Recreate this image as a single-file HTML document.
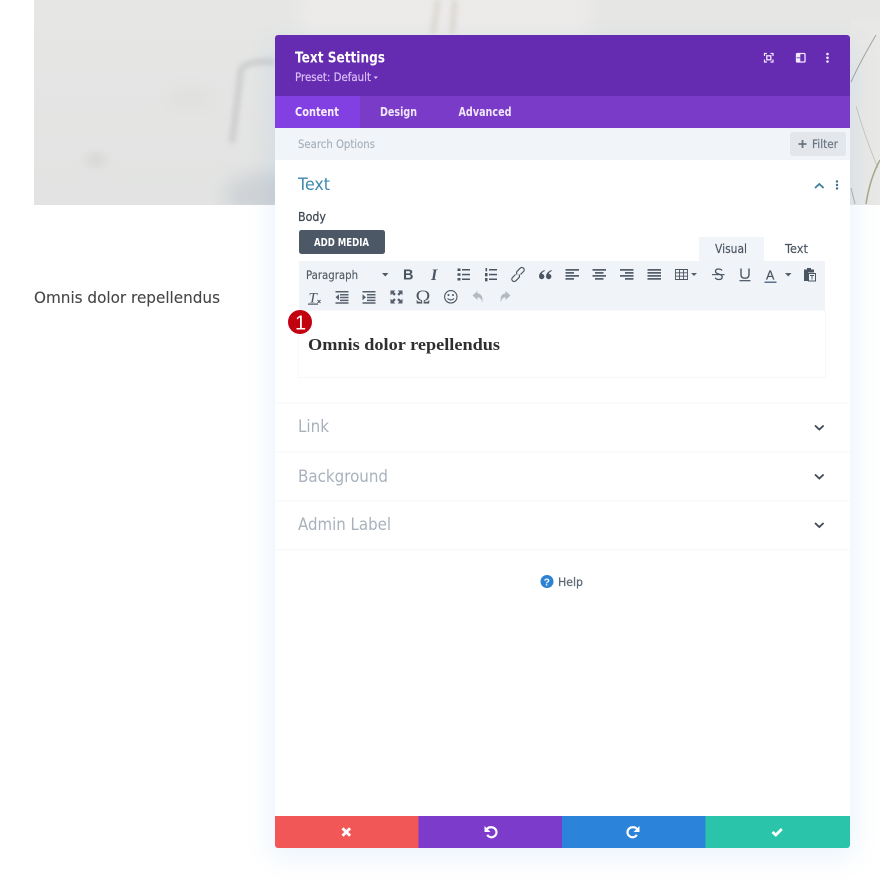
<!DOCTYPE html>
<html><head><meta charset="utf-8"><title>Text Settings</title>
<style>
html,body{margin:0;padding:0;background:#fff;width:880px;height:883px;overflow:hidden}
svg{display:block}
text{font-family:"DejaVu Sans","Liberation Sans",sans-serif}
.s{font-weight:bold}
</style></head><body>
<svg width="880" height="883" viewBox="0 0 880 883" xmlns="http://www.w3.org/2000/svg">
<defs>
<filter id="b3" filterUnits="userSpaceOnUse" x="0" y="-60" width="880" height="320"><feGaussianBlur stdDeviation="3"/></filter>
<filter id="b5" filterUnits="userSpaceOnUse" x="0" y="-60" width="880" height="320"><feGaussianBlur stdDeviation="5"/></filter>
<filter id="b6" filterUnits="userSpaceOnUse" x="0" y="-60" width="880" height="320"><feGaussianBlur stdDeviation="9"/></filter>
<filter id="sh" x="-20%" y="-20%" width="140%" height="140%"><feGaussianBlur stdDeviation="14"/></filter>
<linearGradient id="bg" x1="0" y1="0" x2="0" y2="1"><stop offset="0" stop-color="#e6e6e5"/><stop offset="1" stop-color="#e2e3e2"/></linearGradient>
<clipPath id="im"><rect x="34" y="0" width="846" height="205"/></clipPath>
<clipPath id="p"><rect x="275" y="35" width="575" height="813" rx="3"/></clipPath>
</defs>
<rect width="880" height="883" fill="#fff"/>
<g clip-path="url(#im)">
<rect x="34" y="0" width="846" height="205" fill="url(#bg)"/>
<ellipse cx="262" cy="195" rx="38" ry="22" fill="#cfd3d6" filter="url(#b6)"/>
<path d="M232 143 L241 70 Q244 60 275 62" fill="none" stroke="#c6c8c7" stroke-width="5" filter="url(#b3)"/>
<ellipse cx="96" cy="160" rx="10" ry="6" fill="#d5d6d4" filter="url(#b5)"/>
<ellipse cx="190" cy="98" rx="24" ry="6" fill="#dcdddb" filter="url(#b6)"/>
<rect x="300" y="-10" width="290" height="50" fill="#ecebe9" filter="url(#b6)"/>
<path d="M438 0 L433 34M455 0 L452 34" stroke="#d6d0c8" stroke-width="4" filter="url(#b3)" fill="none"/>
<rect x="850" y="20" width="30" height="185" fill="#e8e8e6"/>
<path d="M876 35 Q860 62 851 82" stroke="#a5a59b" stroke-width="1" fill="none"/>
<path d="M856 106 Q866 140 878 168" stroke="#c0c1b9" stroke-width=".8" fill="none"/>
<path d="M880 160 Q870 178 866 204" stroke="#a5a98a" stroke-width="1.500" fill="none"/>
<path d="M851 188 L855 204" stroke="#b0b0a8" stroke-width="1" fill="none"/>
</g>
<text x="34" y="303" font-size="16" fill="#454545" stroke="#454545" stroke-width=".1" textLength="186" lengthAdjust="spacingAndGlyphs">Omnis dolor repellendus</text>

<rect x="272" y="44" width="581" height="812" rx="4" fill="#2b87da" opacity=".1" filter="url(#sh)"/>
<g clip-path="url(#p)">
<rect x="275" y="35" width="575" height="813" fill="#fff"/>
<rect x="275" y="35" width="575" height="61" fill="#652bb0"/>
<rect x="275" y="96" width="575" height="32" fill="#7a3bc9"/>
<rect x="275" y="96" width="85" height="32" fill="#8240e2"/>
<rect x="275" y="128" width="575" height="32" fill="#f1f5f9"/>
<rect x="275" y="816" width="143.500" height="32" fill="#f25757"/>
<rect x="418.500" y="816" width="143.500" height="32" fill="#7d3bcb"/>
<rect x="562" y="816" width="143.500" height="32" fill="#2b84d9"/>
<rect x="705.500" y="816" width="144.500" height="32" fill="#29c4a9"/>
</g>

<text x="295" y="62.500" font-size="15" class="s" fill="#fff" textLength="90" lengthAdjust="spacingAndGlyphs">Text Settings</text>
<text x="295" y="81" font-size="11.500" fill="#dcc0fa" stroke="#dcc0fa" stroke-width=".2" textLength="76" lengthAdjust="spacingAndGlyphs">Preset: Default</text>
<path d="M373.500 76.500h4.500l-2.250 2.500z" fill="#dcc0fa"/>

<g fill="none" stroke="#f3e9ff" stroke-width="1.200">
<path d="M764.500 56v-2.500h2.500M770.500 53.500h2.500v2.500M773 59.500v2.500h-2.500M767 62h-2.500v-2.500"/>
<rect x="766.800" y="55.800" width="4" height="4" stroke-width="1.300"/>
<rect x="796.500" y="53.500" width="8.500" height="8.500" rx=".8" stroke-width="1.300"/>
</g>
<rect x="796.500" y="53" width="3.800" height="9.500" fill="#f3e9ff"/>
<path d="M796.500 57.800h3.800" stroke="#652bb0" stroke-width=".8"/>
<circle cx="827.500" cy="54" r="1.300" fill="#f3e9ff"/><circle cx="827.500" cy="57.800" r="1.300" fill="#f3e9ff"/><circle cx="827.500" cy="61.500" r="1.300" fill="#f3e9ff"/>

<text x="295" y="116" font-size="12.500" class="s" fill="#f6eeff" textLength="44" lengthAdjust="spacingAndGlyphs">Content</text>
<text x="380" y="116" font-size="12.500" class="s" fill="#f0e6fc" textLength="37" lengthAdjust="spacingAndGlyphs">Design</text>
<text x="458.500" y="116" font-size="12.500" class="s" fill="#f0e6fc" textLength="53" lengthAdjust="spacingAndGlyphs">Advanced</text>

<text x="298" y="148" font-size="11.500" fill="#a6b0ba" stroke="#a6b0ba" stroke-width=".15" textLength="77" lengthAdjust="spacingAndGlyphs">Search Options</text>
<rect x="790" y="132" width="56" height="24" rx="3" fill="#e3e7ec"/>
<path d="M802.500 140v8M798.500 144h8" stroke="#6a7580" stroke-width="1.800"/>
<text x="812" y="148" font-size="11.500" fill="#6a7580" stroke="#6a7580" stroke-width=".2" textLength="26" lengthAdjust="spacingAndGlyphs">Filter</text>

<text x="298" y="190" font-size="17" fill="#3d87ac" textLength="32" lengthAdjust="spacingAndGlyphs">Text</text>
<path d="M815 188l4.300-4 4.300 4" fill="none" stroke="#3d7d9e" stroke-width="1.800"/>
<circle cx="837" cy="181.500" r="1.200" fill="#3d6f8c"/><circle cx="837" cy="185" r="1.200" fill="#3d6f8c"/><circle cx="837" cy="188.500" r="1.200" fill="#3d6f8c"/>

<text x="298" y="221" font-size="12.500" fill="#3e4752" stroke="#3e4752" stroke-width=".25" textLength="28" lengthAdjust="spacingAndGlyphs">Body</text>
<rect x="299" y="230" width="86" height="24" rx="2.500" fill="#4c5866"/>
<text x="314" y="246" font-size="10.500" class="s" fill="#fff" textLength="55" lengthAdjust="spacingAndGlyphs">ADD MEDIA</text>

<rect x="699" y="237" width="65" height="24" fill="#f1f4f9"/>
<text x="715" y="253" font-size="12.500" fill="#4a5561" stroke="#4a5561" stroke-width=".15" textLength="32" lengthAdjust="spacingAndGlyphs">Visual</text>
<text x="785" y="253" font-size="12.500" fill="#4a5561" stroke="#4a5561" stroke-width=".15" textLength="23" lengthAdjust="spacingAndGlyphs">Text</text>

<rect x="298.500" y="310.500" width="527" height="67" fill="#fff" stroke="#f7f8fa"/>
<rect x="299" y="261" width="526" height="49" fill="#f0f3f8"/>

<text x="306" y="279" font-size="11.500" fill="#4f5a66" stroke="#4f5a66" stroke-width=".15" textLength="52" lengthAdjust="spacingAndGlyphs">Paragraph</text>
<path d="M382 273h6.500l-3.250 3.500z" fill="#4f5a66"/>

<!-- row 1 -->
<g fill="#4a5561">
<text x="403" y="279.500" font-size="14.500" class="s" style="font-family:'Liberation Sans',sans-serif" fill="#4a5561">B</text>
<text x="431" y="280" font-size="16" font-weight="bold" font-style="italic" style="font-family:'Liberation Serif',serif" fill="#4a5561">I</text>
<rect x="457.500" y="268.500" width="3" height="2.500"/><rect x="457.500" y="273.300" width="3" height="2.500"/><rect x="457.500" y="278" width="3" height="2.500"/>
<rect x="462" y="269" width="8" height="1.500"/><rect x="462" y="273.800" width="8" height="1.500"/><rect x="462" y="278.500" width="8" height="1.500"/>
<rect x="489" y="269" width="8" height="1.500"/><rect x="489" y="273.800" width="8" height="1.500"/><rect x="489" y="278.500" width="8" height="1.500"/>
<rect x="485.500" y="268" width="1.600" height="3.300"/><rect x="485" y="273" width="2.500" height="3.300"/><rect x="485" y="278" width="2.500" height="3.300"/>
<path d="M544.500 270q-5.500 2-5.500 6.500a2.700 2.700 0 1 0 2.700-2.700q.3-1.500 3.100-2.800zM551.500 270q-5.500 2-5.500 6.500a2.700 2.700 0 1 0 2.700-2.700q.3-1.500 3.100-2.800z"/>
</g>
<g fill="none" stroke="#4a5561" stroke-width="1.200">
<path d="M515.500 274.500l-3 3a2.300 2.300 0 0 0 3.300 3.300l3-3a2.300 2.300 0 0 0 0-3.300M520.500 274.500l3-3a2.300 2.300 0 0 0-3.300-3.300l-3 3a2.300 2.300 0 0 0 0 3.300"/>
</g>
<g fill="#55606c">
<path d="M565.500 269h13.500v1.700h-13.500zM565.500 272h8.500v1.700h-8.500zM565.500 275h13.500v1.700h-13.500zM565.500 278h8.500v1.700h-8.500z"/>
<path d="M592.500 269h13.500v1.700h-13.500zM595 272h8.500v1.700h-8.500zM592.500 275h13.500v1.700h-13.500zM595 278h8.500v1.700h-8.500z"/>
<path d="M620 269h13.500v1.700h-13.500zM625 272h8.500v1.700h-8.500zM620 275h13.500v1.700h-13.500zM625 278h8.500v1.700h-8.500z"/>
<path d="M647.500 269h13.500v1.700h-13.500zM647.500 272h13.500v1.700h-13.500zM647.500 275h13.500v1.700h-13.500zM647.500 278h13.500v1.700h-13.500z"/>
<path d="M691 273h6l-3 3z"/>
<path d="M785 273h6.500l-3.250 3.500z"/>
<rect x="712" y="274" width="12.500" height="1.200"/>
<rect x="739.500" y="280" width="11" height="1.300"/>
<rect x="764.500" y="281.500" width="12" height="1.500" fill="#5a7290"/>
</g>
<g fill="none" stroke="#4a5561" stroke-width=".9">
<path d="M675.500 269.500h12v10h-12zM675.500 272.800h12M675.500 276.200h12M679.500 270v9.500M683.500 270v9.500"/>
<path d="M722 270.500q-1-1.500-3.500-1.500-3 0-3 2.300 0 2 3.200 2.700 3.500.8 3.500 3 0 2.500-3.300 2.500-2.700 0-3.700-1.700" stroke-width="1.300"/>
<path d="M741 268.500v6q0 3.700 4 3.700t4-3.700v-6" stroke-width="1.400"/>
</g>
<text x="766" y="279.500" font-size="12.500" style="font-family:'Liberation Sans',sans-serif" fill="#4a5561" stroke="#4a5561" stroke-width=".2">A</text>
<path d="M804 269.500h3v-1.500h4v1.500h3v3h-6v8.500h-4z" fill="#4a5561"/>
<rect x="808.500" y="273.500" width="7" height="7.500" fill="#f0f3f8" stroke="#4a5561"/>
<path d="M810 275.500h4M812 275.500v4" stroke="#4a5561" stroke-width=".9"/>

<!-- row 2 -->
<text x="308.500" y="302.500" font-size="15" font-style="italic" style="font-family:'Liberation Serif',serif" fill="#4a5561">T</text>
<rect x="308" y="303.500" width="10" height="1.200" fill="#4a5561"/>
<path d="M317.500 300l3 3M320.500 300l-3 3" stroke="#4a5561" stroke-width=".9"/>
<g fill="#55606c">
<path d="M335.500 291h13v1.500h-13zM340 294h8.500v1.500H340zM340 296.800h8.500v1.500H340zM340 299.600h8.500v1.500H340zM335.500 302.300h13v1.500h-13zM339 294.200l-3.500 3 3.500 3z"/>
<path d="M362.500 291h13v1.500h-13zM367 294h8.500v1.500H367zM367 296.800h8.500v1.500H367zM367 299.600h8.500v1.500H367zM362.500 302.300h13v1.500h-13zM362.500 294.200l3.500 3-3.500 3z"/>
<path d="M390.500 290.500h4.800l-1.500 1.500 2 2-1.700 1.700-2-2-1.600 1.500zM402.500 290.500v4.800l-1.500-1.500-2 2-1.700-1.700 2-2-1.500-1.600zM390.500 303.500v-4.800l1.600 1.500 2-2 1.700 1.700-2 2 1.500 1.600zM402.500 303.500h-4.800l1.500-1.600-2-2 1.700-1.700 2 2 1.600-1.500z"/>
</g>
<text x="415.500" y="303.500" font-size="20" style="font-family:'Liberation Serif',serif" fill="#4a5561">Ω</text>
<circle cx="450.800" cy="296.800" r="6.200" fill="none" stroke="#4a5561" stroke-width="1.100"/>
<circle cx="448.500" cy="295" r="1" fill="#4a5561"/><circle cx="453" cy="295" r="1" fill="#4a5561"/>
<path d="M447.500 298.500q3.300 3 6.600 0" fill="none" stroke="#4a5561" stroke-width="1.100"/>
<path d="M477.500 291l-5 4.500 5 4.500v-2.800q3.500 0 4.800 5 1.200-8-4.800-9z" fill="#b3bac2"/>
<path d="M505.500 291l5 4.500-5 4.500v-2.800q-3.500 0-4.800 5-1.200-8 4.800-9z" fill="#b3bac2"/>

<circle cx="300" cy="322" r="12" fill="#c3000f"/>
<text x="295" y="329.500" font-size="20" fill="#fff" style="font-family:'Liberation Sans',sans-serif">1</text>

<text x="308" y="350" font-size="16.500" font-weight="bold" fill="#2f2f2f" style="font-family:'Liberation Serif',serif" textLength="192" lengthAdjust="spacingAndGlyphs">Omnis dolor repellendus</text>

<g fill="#f8f9fb">
<rect x="275" y="402" width="575" height="1.500"/>
<rect x="275" y="451" width="575" height="1.500"/>
<rect x="275" y="500" width="575" height="1.500"/>
<rect x="275" y="549" width="575" height="1.500"/>
</g>
<text x="298" y="432" font-size="16.500" fill="#a9b2bc" textLength="31" lengthAdjust="spacingAndGlyphs">Link</text>
<text x="298" y="482" font-size="16.500" fill="#a9b2bc" textLength="90" lengthAdjust="spacingAndGlyphs">Background</text>
<text x="298" y="530" font-size="16.500" fill="#a9b2bc" textLength="93" lengthAdjust="spacingAndGlyphs">Admin Label</text>
<g fill="none" stroke="#3f4854" stroke-width="1.800">
<path d="M815 425.500l4.300 4 4.300-4"/>
<path d="M815 474.500l4.300 4 4.300-4"/>
<path d="M815 523l4.300 4 4.300-4"/>
</g>

<circle cx="547" cy="581.500" r="6.500" fill="#2b82d4"/>
<text x="543.800" y="585.500" font-size="10" font-weight="bold" fill="#fff" style="font-family:'Liberation Sans',sans-serif">?</text>
<text x="558" y="586" font-size="11.500" fill="#5d6873" stroke="#5d6873" stroke-width=".25" textLength="25" lengthAdjust="spacingAndGlyphs">Help</text>

<!-- footer icons -->
<path d="M341.500 828l2-2 2.800 2.800 2.800-2.800 2 2-2.800 2.800 2.800 2.800-2 2-2.800-2.800-2.800 2.800-2-2 2.800-2.800z" fill="#fff" transform="translate(0 1.200)"/>
<path d="M487 829q1.500-2 4-1.700a5 5 0 1 1-3.800 7.500" fill="none" stroke="#fff" stroke-width="2.200"/>
<path d="M484.500 826v6h6z" fill="#fff"/>
<path d="M637 829q-1.500-2-4-1.700a5 5 0 1 0 3.800 7.500" fill="none" stroke="#fff" stroke-width="2.200"/>
<path d="M639.500 826v6h-6z" fill="#fff"/>
<path d="M772.500 832l3.300 3 6-6" fill="none" stroke="#fff" stroke-width="2.800"/>
</svg>
</body></html>
